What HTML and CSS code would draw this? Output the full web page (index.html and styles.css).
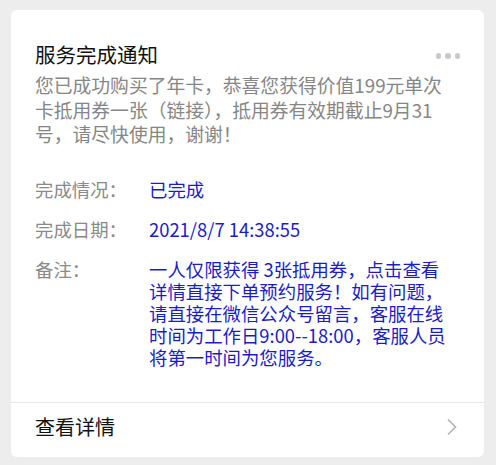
FILE: index.html
```html
<!DOCTYPE html>
<html lang="zh-CN">
<head>
  <meta charset="UTF-8" />
  <meta name="viewport" content="width=device-width, initial-scale=1.0"/>
  <title>服务完成通知</title>
  <link rel="stylesheet" href="styles.css">
</head>
<body>
  <div class="card">
    <div class="card-body">
      <div class="card-head">
        <h2 class="title">服务完成通知</h2>
        <span class="more"><i></i><i></i><i></i></span>
      </div>
      <p class="desc">您已成功购买了年卡，恭喜您获得价值199元单次卡抵用券一张（链接），抵用券有效期截止9月31号，请尽快使用，谢谢！</p>

      <div class="fields">
        <div class="field">
          <span class="field-label">完成情况：</span>
          <span class="field-value">已完成</span>
        </div>
        <div class="field">
          <span class="field-label">完成日期：</span>
          <span class="field-value">2021/8/7 14:38:55</span>
        </div>
        <div class="field">
          <span class="field-label">备注：</span>
          <span class="field-value">一人仅限获得 3张抵用券，点击查看详情直接下单预约服务！如有问题，请直接在微信公众号留言，客服在线时间为工作日9:00--18:00，客服人员将第一时间为您服务。</span>
        </div>
      </div>
    </div>

    <a class="card-foot" href="#">
      <span>查看详情</span>
      <svg class="arrow" width="12" height="18" viewBox="0 0 12 18">
        <polyline points="2,1.5 9.5,9 2,16.5" fill="none" stroke="#b4b4b4" stroke-width="1.6"/>
      </svg>
    </a>
  </div>
</body>
</html>
```

FILE: styles.css
```css
body {
  margin: 0;
  padding: 10px 0 8px 11px;
  background: #ededed;
  font-family: "Noto Sans CJK SC", "Noto Sans", sans-serif;
}
.card {
  width: 473px;
  background: #fff;
  border-radius: 6px;
}
.card-body {
  padding: 30px 24px 34px 24px;
}
.card-head {
  display: flex;
  justify-content: space-between;
  align-items: center;
}
.title {
  margin: 0;
  font-size: 20.5px;
  font-weight: normal;
  line-height: 28px;
  color: #111;
}
.more {
  display: flex;
  gap: 4px;
  margin-top: 4px;
}
.more i {
  width: 5.5px;
  height: 5.5px;
  border-radius: 50%;
  background: #c9c9c9;
}
.desc {
  margin: 5px 0 0;
  max-width: 416px;
  font-size: 18.8px;
  line-height: 24.5px;
  color: #868686;
}
.fields {
  margin-top: 31px;
  display: flex;
  flex-direction: column;
  gap: 18px;
}
.field {
  display: grid;
  grid-template-columns: 114px 300px;
  font-size: 18.4px;
  line-height: 22px;
}
.field-label {
  color: #8a8a8a;
}
.field-value {
  color: #1c1cc6;
}
.card-foot {
  display: flex;
  justify-content: space-between;
  align-items: center;
  height: 48px;
  padding: 0 26px 6px 24px;
  border-top: 1px solid #e6e6e6;
  font-size: 20px;
  color: #111;
  text-decoration: none;
}
.arrow {
  display: block;
}
```
